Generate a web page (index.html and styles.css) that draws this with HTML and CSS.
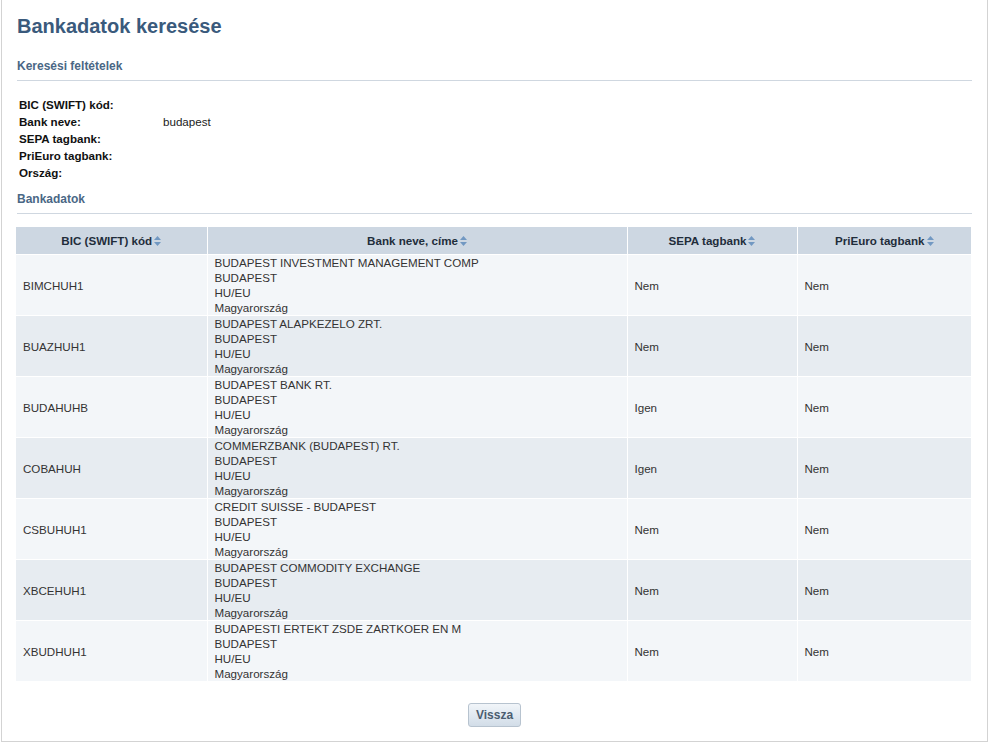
FILE: index.html
```html
<!DOCTYPE html>
<html lang="hu">
<head>
<meta charset="utf-8">
<title>Bankadatok keresése</title>
<link rel="stylesheet" href="styles.css">
</head>
<body>
<div class="page">
  <h1 class="title">Bankadatok keresése</h1>
  <h2 class="section">Keresési feltételek</h2>
  <div class="criteria">
    <div class="crit-row"><span class="crit-label">BIC (SWIFT) kód:</span><span class="crit-value"></span></div>
    <div class="crit-row"><span class="crit-label">Bank neve:</span><span class="crit-value">budapest</span></div>
    <div class="crit-row"><span class="crit-label">SEPA tagbank:</span><span class="crit-value"></span></div>
    <div class="crit-row"><span class="crit-label">PriEuro tagbank:</span><span class="crit-value"></span></div>
    <div class="crit-row"><span class="crit-label">Ország:</span><span class="crit-value"></span></div>
  </div>
  <h2 class="section section-2">Bankadatok</h2>
  <table class="results">
    <colgroup>
      <col class="c1"><col class="c2"><col class="c3"><col class="c4">
    </colgroup>
    <thead>
      <tr>
        <th>BIC (SWIFT) kód<svg class="sort" width="7" height="10" viewBox="0 0 7 10"><path d="M3.5 0L7 4H0Z M0 6H7L3.5 10Z"/></svg></th>
        <th>Bank neve, címe<svg class="sort" width="7" height="10" viewBox="0 0 7 10"><path d="M3.5 0L7 4H0Z M0 6H7L3.5 10Z"/></svg></th>
        <th>SEPA tagbank<svg class="sort" width="7" height="10" viewBox="0 0 7 10"><path d="M3.5 0L7 4H0Z M0 6H7L3.5 10Z"/></svg></th>
        <th>PriEuro tagbank<svg class="sort" width="7" height="10" viewBox="0 0 7 10"><path d="M3.5 0L7 4H0Z M0 6H7L3.5 10Z"/></svg></th>
      </tr>
    </thead>
    <tbody>
      <tr class="odd"><td>BIMCHUH1</td><td>BUDAPEST INVESTMENT MANAGEMENT COMP<br>BUDAPEST<br>HU/EU<br>Magyarország</td><td>Nem</td><td>Nem</td></tr>
      <tr class="even"><td>BUAZHUH1</td><td>BUDAPEST ALAPKEZELO ZRT.<br>BUDAPEST<br>HU/EU<br>Magyarország</td><td>Nem</td><td>Nem</td></tr>
      <tr class="odd"><td>BUDAHUHB</td><td>BUDAPEST BANK RT.<br>BUDAPEST<br>HU/EU<br>Magyarország</td><td>Igen</td><td>Nem</td></tr>
      <tr class="even"><td>COBAHUH</td><td>COMMERZBANK (BUDAPEST) RT.<br>BUDAPEST<br>HU/EU<br>Magyarország</td><td>Igen</td><td>Nem</td></tr>
      <tr class="odd"><td>CSBUHUH1</td><td>CREDIT SUISSE - BUDAPEST<br>BUDAPEST<br>HU/EU<br>Magyarország</td><td>Nem</td><td>Nem</td></tr>
      <tr class="even"><td>XBCEHUH1</td><td>BUDAPEST COMMODITY EXCHANGE<br>BUDAPEST<br>HU/EU<br>Magyarország</td><td>Nem</td><td>Nem</td></tr>
      <tr class="odd"><td>XBUDHUH1</td><td>BUDAPESTI ERTEKT ZSDE ZARTKOER EN M<br>BUDAPEST<br>HU/EU<br>Magyarország</td><td>Nem</td><td>Nem</td></tr>
    </tbody>
  </table>
  <div class="actions">
    <button class="btn" type="button">Vissza</button>
  </div>
</div>
</body>
</html>
```

FILE: styles.css
```css
html, body {
  margin: 0;
  padding: 0;
  background: #ffffff;
}
body {
  font-family: "Liberation Sans", Arial, sans-serif;
  font-size: 11.6px;
  color: #333333;
}
.page {
  margin: 0 1px 0 1px;
  width: 955px;
  height: 727px;
  padding: 14px 15px 0 15px;
  border: 1px solid #d3d3d3;
  border-top: 0;
}
.title {
  margin: 0;
  font-size: 20px;
  line-height: 24px;
  font-weight: bold;
  color: #3a5a7c;
}
.section {
  margin: 21px 0 0 0;
  padding: 0 0 6px 0;
  font-size: 12px;
  line-height: 15px;
  font-weight: bold;
  color: #4a6785;
  border-bottom: 1px solid #cfd7e0;
}
.section-2 {
  margin-top: 11px;
}
.criteria {
  margin: 15px 0 0 2px;
}
.crit-row {
  display: flex;
  height: 17px;
  line-height: 17px;
}
.crit-label {
  width: 144px;
  font-weight: bold;
  color: #111111;
}
.crit-value {
  color: #222222;
}
.results {
  margin-top: 13px;
  margin-left: -1px;
  width: 955px;
  border-collapse: collapse;
  table-layout: fixed;
}
.c1 { width: 191px; }
.c2 { width: 420px; }
.c3 { width: 170px; }
.c4 { width: 174px; }
.results th {
  height: 27px;
  padding: 0;
  background: #cdd7e2;
  border: 1px solid #ffffff;
  border-top: 0;
  font-weight: bold;
  color: #1f2d3b;
  text-align: center;
  vertical-align: middle;
}
.results th:first-child { border-left: 0; }
.results th:last-child { border-right: 0; }
.sort {
  fill: #7198c2;
  margin-left: 2px;
  vertical-align: -1px;
}
.results td {
  padding: 0 0 0 7px;
  line-height: 15px;
  height: 60px;
  border: 1px solid #ffffff;
  vertical-align: middle;
  color: #333333;
}
.results td:first-child { border-left: 0; padding-left: 7px; }
.results td:last-child { border-right: 0; }
.odd td { background: #f3f6f9; }
.even td { background: #e7ecf1; }
.actions {
  display: flex;
  justify-content: center;
  margin-top: 21px;
}
.btn {
  width: 53px;
  height: 24px;
  padding: 0;
  font-family: "Liberation Sans", Arial, sans-serif;
  font-size: 12px;
  font-weight: bold;
  color: #4b5d70;
  background: linear-gradient(#f1f5f9, #d2dde8);
  border: 1px solid #b7c3cf;
  border-radius: 3px;
}
```
